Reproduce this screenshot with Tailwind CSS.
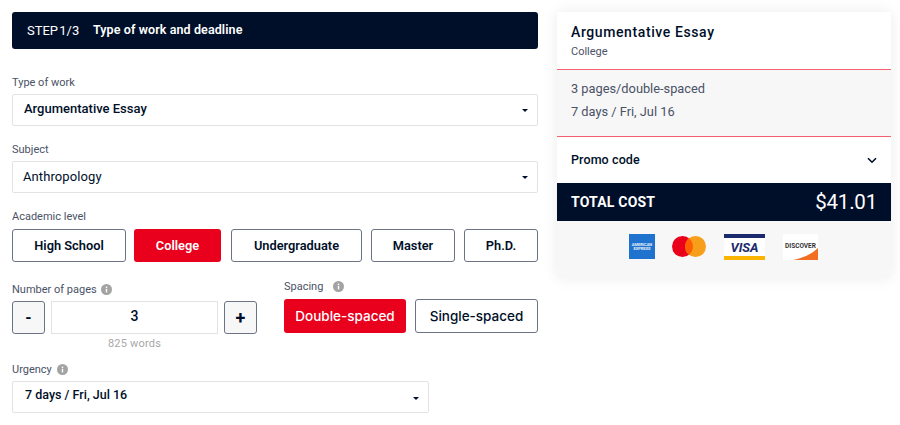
<!DOCTYPE html>
<html lang="en">
<head>
    <meta charset="UTF-8">
    <title>Order form</title>
    <script src="https://cdn.jsdelivr.net/npm/@tailwindcss/browser@4"></script>
</head>
<body class="bg-white font-['Roboto',sans-serif] text-[#000f29] overflow-hidden">
    <div class="w-[900px] h-[425px] flex items-start pt-3 pl-3 overflow-hidden">
        <!-- form -->
        <main class="w-[526px] shrink-0">
            <div class="h-[37px] bg-[#000f29] rounded-[3px] flex items-center pl-[15px] text-white">
                <span class="w-[66px] text-[13px] [word-spacing:-2px]">STEP 1/3</span>
                <span class="font-semibold text-[12.5px] tracking-[0.1px]">Type of work and deadline</span>
            </div>

            <label class="block mt-[27px] h-[18px] text-[11px] text-[#4a5266] leading-[13px]">Type of work</label>
            <div class="h-8 border border-[#e3e3e3] rounded-[2px] flex items-center justify-between pl-[11px] pr-[9px] pb-[3px] text-[13px] font-medium">
                <span>Argumentative Essay</span>
                <span class="w-0 h-0 mt-[3px] border-x-[3px] border-x-transparent border-t-[3px] border-t-[#000f29]"></span>
            </div>

            <label class="block mt-[17px] h-[18px] text-[11px] text-[#4a5266] leading-[13px]">Subject</label>
            <div class="h-8 border border-[#e3e3e3] rounded-[2px] flex items-center justify-between pl-[10px] pr-[9px] pb-[1px] text-[13px] tracking-[0.1px]">
                <span>Anthropology</span>
                <span class="w-0 h-0 mt-[2px] border-x-[3px] border-x-transparent border-t-[3px] border-t-[#000f29]"></span>
            </div>

            <label class="block mt-[17px] h-[19px] text-[11px] text-[#4a5266] leading-[13px]">Academic level</label>
            <div class="flex h-[33px] text-[12.8px] font-semibold">
                <button class="w-[114px] border border-[#6b7385] rounded-[3px]">High School</button>
                <button class="w-[87px] ml-2 bg-[#e8001c] text-white rounded-[3px]">College</button>
                <button class="w-[131px] ml-[10px] border border-[#6b7385] rounded-[3px]">Undergraduate</button>
                <button class="w-[84px] ml-[9px] border border-[#6b7385] rounded-[3px]">Master</button>
                <button class="w-[74px] ml-[9px] border border-[#6b7385] rounded-[3px]">Ph.D.</button>
            </div>

            <div class="flex mt-[21px]">
                <div class="w-[272px]">
                    <div class="h-[18px] flex items-start gap-1 text-[11px] text-[#4a5266] leading-[13px]">
                        <span>Number of pages</span>
                        <svg class="mt-px" width="11" height="11" viewBox="0 0 11 11"><circle cx="5.5" cy="5.5" r="5.5" fill="#a3a3a3"/><rect x="4.8" y="4.8" width="1.4" height="3.6" fill="#fff"/><rect x="4.8" y="2.6" width="1.4" height="1.4" fill="#fff"/></svg>
                    </div>
                    <div class="flex h-[33px]">
                        <button class="w-[33px] border border-[#6b7385] rounded-[3px] bg-[#f7f7f7] font-bold text-base">-</button>
                        <div class="w-[167px] ml-1.5 border border-[#e3e3e3] flex items-center justify-center text-[14px] font-medium pb-[3px]">3</div>
                        <button class="w-[33px] ml-1.5 border border-[#6b7385] rounded-[3px] bg-[#f7f7f7] font-bold text-lg">+</button>
                    </div>
                    <div class="w-[167px] ml-[39px] text-center text-[11px] text-[#a8a8a8] mt-[3px] leading-[14px] tracking-[0.2px]">825 words</div>
                </div>
                <div class="flex-1 -mt-[4px]">
                    <div class="h-5 pt-px flex items-start gap-[10px] text-[11px] text-[#4a5266] leading-[13px]">
                        <span>Spacing</span>
                        <svg class="mt-px" width="11" height="11" viewBox="0 0 11 11"><circle cx="5.5" cy="5.5" r="5.5" fill="#a3a3a3"/><rect x="4.8" y="4.8" width="1.4" height="3.6" fill="#fff"/><rect x="4.8" y="2.6" width="1.4" height="1.4" fill="#fff"/></svg>
                    </div>
                    <div class="flex h-[34px] font-['Inter',sans-serif] text-[13.5px] font-medium">
                        <button class="w-[122px] bg-[#e8001c] text-white rounded-[3px]">Double-spaced</button>
                        <button class="w-[123px] ml-[9px] border border-[#6b7385] rounded-[3px]">Single-spaced</button>
                    </div>
                </div>
            </div>

            <div class="mt-[12px] h-[18px] flex items-start gap-[5px] text-[11px] text-[#4a5266] leading-[13px]">
                <span>Urgency</span>
                <svg class="mt-px" width="11" height="11" viewBox="0 0 11 11"><circle cx="5.5" cy="5.5" r="5.5" fill="#a3a3a3"/><rect x="4.8" y="4.8" width="1.4" height="3.6" fill="#fff"/><rect x="4.8" y="2.6" width="1.4" height="1.4" fill="#fff"/></svg>
            </div>
            <div class="w-[417px] h-8 border border-[#e3e3e3] rounded-[2px] flex items-center justify-between pl-3 pr-[9px] pb-[3px] text-[12.5px] font-medium">
                <span>7 days / Fri, Jul 16</span>
                <span class="w-0 h-0 mt-[5px] border-x-[3px] border-x-transparent border-t-[3px] border-t-[#000f29]"></span>
            </div>
        </main>

        <!-- summary -->
        <aside class="w-[334px] h-[266px] ml-[19px] shrink-0 bg-[#f7f7f7] shadow-[0_0_14px_rgba(0,0,0,0.08)] flex flex-col">
            <div class="h-[58px] bg-white border-b border-[#f4606f] pl-[14px] pt-3">
                <div class="text-[14px] font-medium tracking-[0.6px] leading-[17px]">Argumentative Essay</div>
                <div class="text-[11px] text-[#4a5266] mt-[4px] leading-[13px]">College</div>
            </div>
            <div class="h-[67px] border-b border-[#f4606f] pl-[14px] pt-[11px] text-[12.8px] text-[#4a5266] leading-[16px]">
                <div>3 pages/double-spaced</div>
                <div class="mt-[7px]">7 days / Fri, Jul 16</div>
            </div>
            <div class="h-[46px] bg-white flex items-center justify-between pl-[14px] pr-[14px] text-[12.5px] font-medium tracking-[0.1px]">
                <span>Promo code</span>
                <svg width="10" height="7" viewBox="0 0 10 7" fill="none" stroke="#000f29" stroke-width="1.6"><path d="M1 1.2l4 4 4-4"/></svg>
            </div>
            <div class="h-[38px] bg-[#000f29] text-white flex items-center justify-between pl-[14px] pr-[14px]">
                <span class="text-[14px] font-bold tracking-[0.2px]">TOTAL COST</span>
                <span class="text-[20.5px] leading-none tracking-[-0.2px]">$41.01</span>
            </div>
            <div class="flex-1 flex items-start pt-[13px] pl-[72px]">
                <!-- amex -->
                <div class="w-[26px] h-[25px] bg-[#1f72cd] flex flex-col items-center justify-center text-[4px] leading-[4px] text-white/90 font-bold">
                    <span>AMERICAN</span><span>EXPRESS</span>
                </div>
                <!-- mastercard -->
                <svg class="ml-[17px] mt-[2px]" width="34" height="21" viewBox="0 0 34 21"><circle cx="10.5" cy="10.5" r="10.5" fill="#eb001b"/><circle cx="23.5" cy="10.5" r="10.5" fill="#f79e1b"/><path d="M17 2.3a10.5 10.5 0 0 1 0 16.4a10.5 10.5 0 0 1 0-16.4z" fill="#ff5f00"/></svg>
                <!-- visa -->
                <div class="ml-[18px] w-[41px] h-[26px] bg-white flex flex-col justify-between">
                    <div class="h-1 bg-[#1a2a6c]"></div>
                    <div class="text-center text-[13px] leading-none font-bold italic text-[#1a2a6c]">VISA</div>
                    <div class="h-1 bg-[#fbb400]"></div>
                </div>
                <!-- discover -->
                <div class="ml-[18px] w-[35px] h-[26px] bg-white relative overflow-hidden text-center">
                    <svg class="absolute inset-0" width="35" height="26" viewBox="0 0 35 26"><path d="M35 14V26H10C20 24 29 20 35 14z" fill="#f26e21"/></svg>
                    <span class="relative block text-[6.5px] font-bold text-[#333] leading-[26px] -mt-[1px]">DISCOVER</span>
                </div>
            </div>
        </aside>
    </div>
</body>
</html>
